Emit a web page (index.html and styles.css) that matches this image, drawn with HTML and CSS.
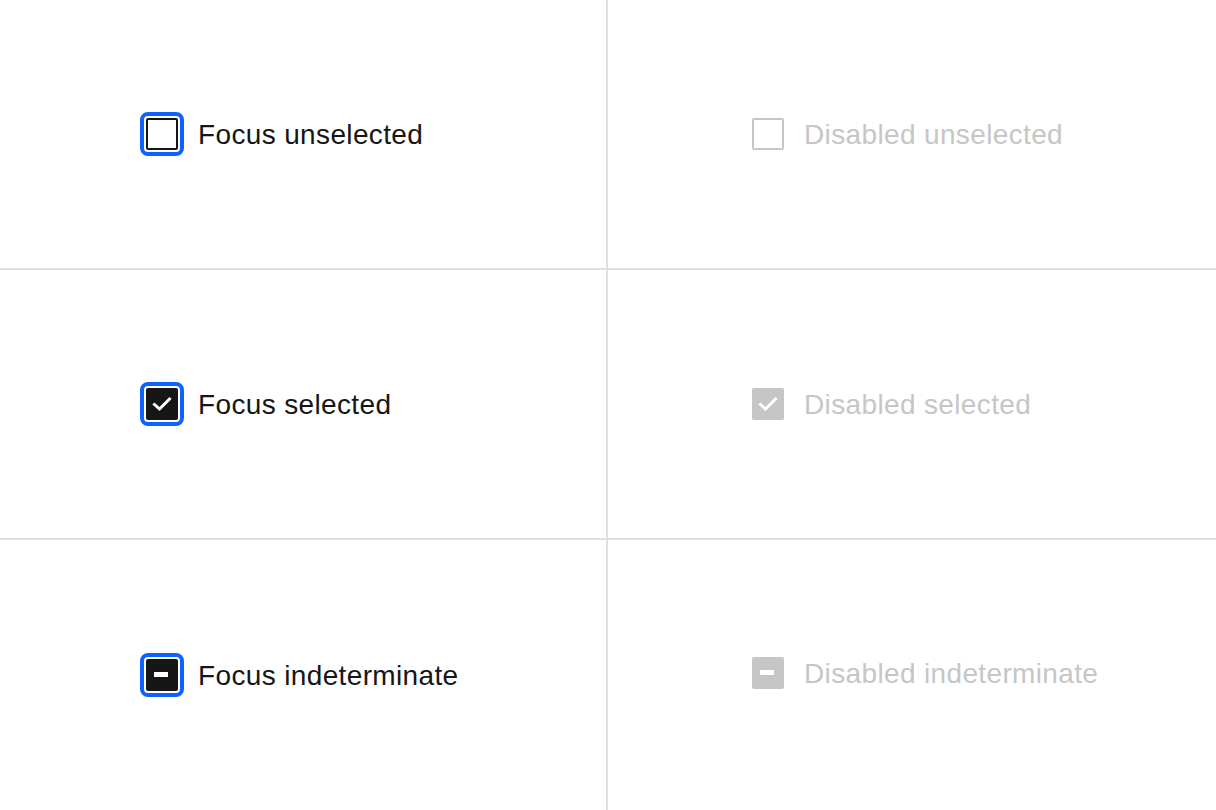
FILE: index.html
```html
<!DOCTYPE html>
<html lang="en">
<head>
<meta charset="utf-8">
<title>Checkbox states</title>
<link rel="stylesheet" href="styles.css">
</head>
<body>
<div class="grid">
  <div class="cell cell-left">
    <label class="cb">
      <span class="box box-focus"></span>
      <span class="text">Focus unselected</span>
    </label>
  </div>
  <div class="cell cell-right">
    <label class="cb cb-disabled">
      <span class="box box-disabled"></span>
      <span class="text">Disabled unselected</span>
    </label>
  </div>

  <div class="cell cell-left">
    <label class="cb">
      <span class="box box-focus box-filled">
        <svg class="mark" viewBox="0 0 32 32" width="32" height="32"><polyline points="8.5,16.5 13.5,21 23.5,11" fill="none" stroke="#ffffff" stroke-width="3" stroke-linecap="square"/></svg>
      </span>
      <span class="text">Focus selected</span>
    </label>
  </div>
  <div class="cell cell-right">
    <label class="cb cb-disabled">
      <span class="box box-disabled box-disabled-filled">
        <svg class="mark" viewBox="0 0 32 32" width="32" height="32"><polyline points="8.5,16.5 13.5,21 23.5,11" fill="none" stroke="#ffffff" stroke-width="3" stroke-linecap="square"/></svg>
      </span>
      <span class="text">Disabled selected</span>
    </label>
  </div>

  <div class="cell cell-left cell-last">
    <label class="cb">
      <span class="box box-focus box-filled">
        <svg class="mark" viewBox="0 0 32 32" width="32" height="32"><rect x="8" y="13" width="14" height="5" fill="#ffffff"/></svg>
      </span>
      <span class="text">Focus indeterminate</span>
    </label>
  </div>
  <div class="cell cell-right cell-last cell-raised">
    <label class="cb cb-disabled">
      <span class="box box-disabled box-disabled-filled">
        <svg class="mark" viewBox="0 0 32 32" width="32" height="32"><rect x="8" y="13" width="14" height="5" fill="#ffffff"/></svg>
      </span>
      <span class="text">Disabled indeterminate</span>
    </label>
  </div>
</div>
</body>
</html>
```

FILE: styles.css
```css
* {
  box-sizing: border-box;
}

html, body {
  margin: 0;
  padding: 0;
  background: #ffffff;
}

body {
  font-family: "Liberation Sans", Arial, sans-serif;
  color: #161616;
}

.grid {
  display: grid;
  grid-template-columns: 608px 608px;
  grid-template-rows: 270px 270px 270px;
  width: 1216px;
  height: 810px;
}

.cell {
  display: flex;
  align-items: center;
  border-bottom: 2px solid #e0e0e0;
}

.cell-last {
  border-bottom: 0;
}

.cell-left {
  border-right: 2px solid #e0e0e0;
  padding-left: 146px;
}

.cell-right {
  padding-left: 144px;
}

.cell-raised {
  padding-bottom: 4px;
}

.cb {
  display: flex;
  align-items: center;
}

.box {
  position: relative;
  flex: 0 0 auto;
  width: 32px;
  height: 32px;
  border: 2px solid #161616;
  border-radius: 2px;
  background: #ffffff;
}

.box-focus {
  outline: 4px solid #0f62fe;
  outline-offset: 2px;
}

.box-filled {
  background: #161616;
}

.box-disabled {
  border-color: #c6c6c6;
}

.box-disabled-filled {
  background: #c6c6c6;
}

.mark {
  position: absolute;
  top: -2px;
  left: -2px;
  display: block;
}

.text {
  margin-left: 20px;
  padding-top: 2px;
  font-size: 28px;
  line-height: 36px;
  letter-spacing: 0.36px;
  color: #161616;
}

.cb-disabled .text {
  color: #c6c6c6;
}
```
